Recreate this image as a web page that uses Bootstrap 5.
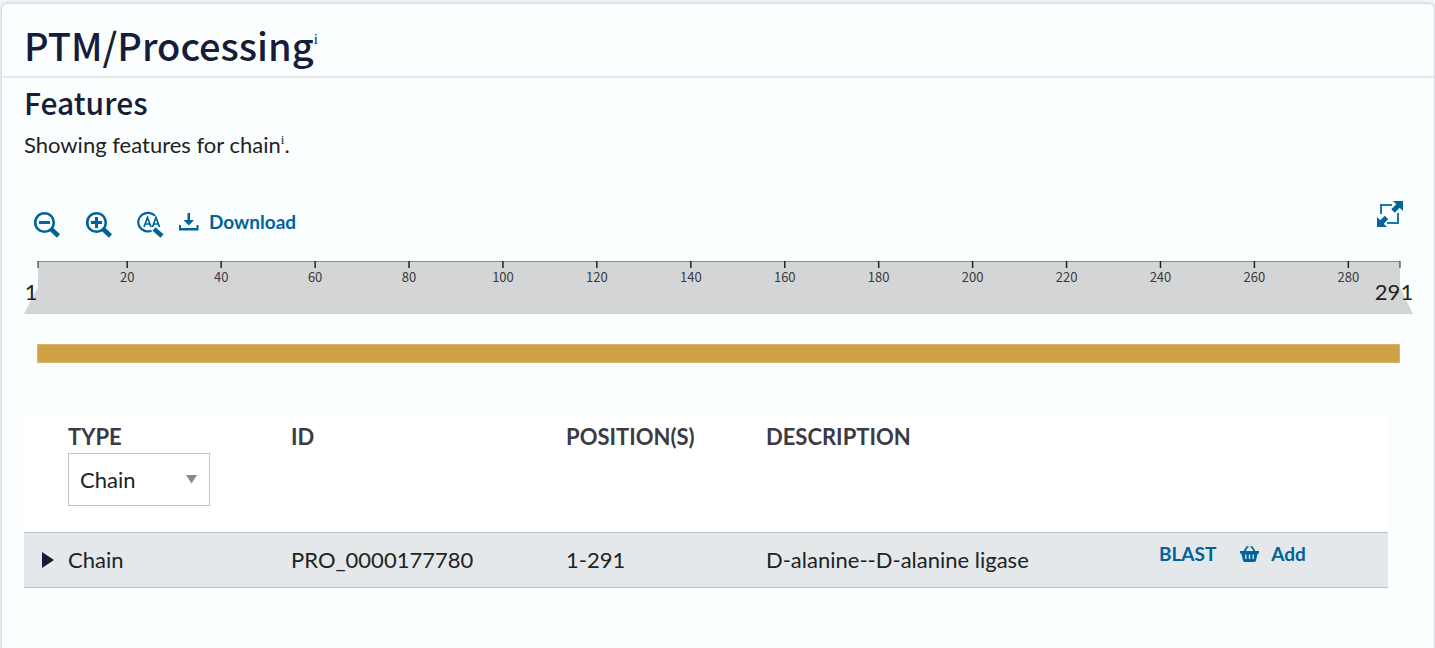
<!DOCTYPE html>
<html lang="en">
<head>
<meta charset="utf-8">
<meta name="viewport" content="width=device-width, initial-scale=1">
<title>PTM/Processing</title>
<link href="https://cdn.jsdelivr.net/npm/bootstrap@5.3.0/dist/css/bootstrap.min.css" rel="stylesheet">
<style>
  body { background: #f3f6f9; color: #222; font: 400 22px/30px Lato, sans-serif; }
  .section-card { min-height: calc(100vh - 4px); margin: 4px 1px 0 2px; background: #fbfeff; border: 0; border-radius: 5px 5px 0 0; box-shadow: 0 0 3px 1px #c9ccd4; color: inherit; }
  .section-head { padding: 16px 22px 6px; border-bottom: 2px solid #e4e8eb; }
  h2, h3 { font-family: "Noto Sans CJK SC", sans-serif; font-weight: 500; color: #161d39; margin: 0; }
  h2 { font-size: 38px; line-height: 50px; }
  h3 { font-size: 30px; line-height: 40px; }
  .info { font: 400 13px/12px "Liberation Serif", serif; color: #161d39; top: 0; vertical-align: 9px; }
  h2 .info { vertical-align: 17px; font-size: 15px; }
  .section-body { padding: 4px 22px 0; }
  .tool, .tool:hover { color: #00639a; font-weight: 700; font-size: 19px; line-height: 24px; text-decoration: none; background: none; border: 0; padding: 0; }
  .tool svg { display: block; }
  .toolbar { margin-top: 38px; padding: 0 9px; height: 40px; }
  .tool-zoom { padding-top: 13px; }
  .tool-download { padding-top: 12px; margin-left: 13px; gap: 9px; }
  .ruler { display: block; width: calc(100% - 24px); height: 54px; margin: 23px 0 0 14px; overflow: visible; }
  .ruler-row { margin-right: 2px; }
  .ruler text { font: 13px "Noto Sans CJK SC", sans-serif; fill: #3a3a3a; text-anchor: middle; }
  .ruler .edge { font: 400 22px Lato, sans-serif; fill: #222; }
  .chain-track { height: 19px; margin: 29px 12px 0 13px; background: #cfa246; border: 1px solid #d9b56c; }
  .ruler-band { fill: #d4d5d7; }
  .features { width: calc(100% - 24px); table-layout: fixed; margin: 53px 0 0; }
  .features th { height: 116px; padding: 6px 0 0; vertical-align: top; background: #fff; color: #3a3b45; font-weight: 700; }
  .features td { height: 55px; padding: 0; background: #e4e8eb; border: solid #bfc1c3; border-width: 1px 0; vertical-align: middle; }
  .type-select { display: block; width: 142px; height: 53px; margin-top: 1px; padding: 0 11px; appearance: none; border: 1px solid #c4c4c4; border-radius: 0; color: #222; font-weight: 400;
    background: #fff url("data:image/svg+xml,%3Csvg xmlns='http://www.w3.org/2000/svg' width='11' height='9'%3E%3Cpath d='M0 0h11L5.5 8.5z' fill='%238a8a8a'/%3E%3C/svg%3E") no-repeat right 12px center; }
  .opener { display: block; margin-left: 18px; padding: 0; border: 0; background: none; line-height: 0; }
  .row-actions { gap: 24px; padding-bottom: 12px; }
</style>
</head>
<body>
<main class="card section-card">
  <header class="section-head">
    <h2>PTM/Processing<sup class="info">i</sup></h2>
  </header>
  <div class="section-body">
    <h3>Features</h3>
    <p class="mb-0 mt-2">Showing features for chain<sup class="info">i</sup>.</p>

    <div class="toolbar d-flex align-items-start">
      <button class="tool tool-zoom" type="button" aria-label="Zoom out">
        <svg width="28" height="28" viewBox="0 0 28 28" fill="none" stroke="#00639a"><circle cx="11.500" cy="11.500" r="9.300" stroke-width="2.600"/><path d="M6 11.500h11" stroke-width="3"/><path d="M18 18l7.500 7" stroke-width="4.500"/></svg>
      </button>
      <button class="tool tool-zoom ms-4" type="button" aria-label="Zoom in">
        <svg width="28" height="28" viewBox="0 0 28 28" fill="none" stroke="#00639a"><circle cx="11.500" cy="11.500" r="9.300" stroke-width="2.600"/><path d="M6 11.500h11M11.500 6v11" stroke-width="3"/><path d="M18 18l7.500 7" stroke-width="4.500"/></svg>
      </button>
      <button class="tool tool-zoom ms-4" type="button" aria-label="Zoom to sequence">
        <svg width="28" height="28" viewBox="1 0 28 28" fill="none" stroke="#00639a"><path d="M19 4.700A9.700 9.300 0 1 0 15.500 19.800" stroke-width="2.200"/><path d="M8 16l3.500-9.500L15 16M9.300 13h4.500M16.500 16L20 6.500l3.500 9.500M17.800 13h4.500" stroke-width="1.700"/><path d="M18 18l8 7" stroke-width="4.500"/></svg>
      </button>
      <button class="tool tool-download d-flex align-items-center" type="button">
        <svg width="22" height="22" viewBox="0 0 22 22" fill="#00639a"><path d="M9.500 2h2.500v7h4l-5.200 5.500L5.500 9h4zM1 14h2v3h15.500v-3h2v5.500H1z"/></svg><span>Download</span>
      </button>
      <button class="tool ms-auto" type="button" aria-label="Full screen">
        <svg width="28" height="32" viewBox="0 -3 28 32"><path d="M6 13V4h11M12 22h11V12" fill="none" stroke="#1b78ad" stroke-width="2"/><path d="M18 0h10v10l-3.300-3.300-5 5-3.400-3.400 5-5zM2 26V16l3.300 3.300 4.500-4.500 3.400 3.400-4.500 4.500L12 26z" fill="#00639a"/></svg>
      </button>
    </div>

    <div class="ruler-row">
      <svg class="ruler" id="ruler" role="img" aria-label="Sequence positions 1 to 291">
        <rect class="ruler-band" width="100%" height="53"/>
        <path class="ruler-band" d="M0 26V53H-14z"/>
        <svg x="100%" overflow="visible"><path class="ruler-band" d="M0 26V53H13z"/></svg>
        <rect width="100%" height="1" fill="#8c8d8f"/>
        <g id="ticks"></g>
        <text class="edge" x="-7" y="39">1</text>
        <svg x="100%" overflow="visible"><text class="edge" x="-6" y="39">291</text></svg>
      </svg>
    </div>
    <div class="chain-track" role="img" aria-label="Chain 1-291"></div>

    <table class="features">
      <colgroup><col style="width:3.230%"><col style="width:16.350%"><col style="width:20.160%"><col style="width:14.660%"><col style="width:28.810%"><col></colgroup>
      <thead>
        <tr>
          <th></th>
          <th scope="col"><label for="type" class="d-block">TYPE</label>
            <select class="type-select" id="type"><option>Chain</option></select></th>
          <th scope="col">ID</th><th scope="col">POSITION(S)</th><th scope="col">DESCRIPTION</th><th></th>
        </tr>
      </thead>
      <tbody>
        <tr>
          <td><button class="opener" type="button" aria-label="Show details"><svg width="12" height="16"><path d="M0 0l12 8-12 8z" fill="#161d39"/></svg></button></td>
          <td>Chain</td><td>PRO_0000177780</td><td>1-291</td><td>D-alanine--D-alanine ligase</td>
          <td><div class="row-actions d-flex align-items-center">
            <a class="tool" href="#">BLAST</a>
            <button class="tool d-flex align-items-center" type="button">
              <svg width="19" height="16" viewBox="0 0 19 16" fill="#00639a"><path d="M0 5h19v2.500h-1.300L16 14.500q-.3 1.500-1.800 1.500H4.800Q3.300 16 3 14.500L1.300 7.500H0z"/><path d="M4 6l3-5h1.500M15 6l-3-5h-1.500" fill="none" stroke="#00639a" stroke-width="1.700"/><path d="M5.800 8.500v4.500M9.500 8.500v4.500M13.200 8.500v4.500" stroke="#e4e8eb" stroke-width="1.300"/></svg><span class="ms-2 ps-1">Add</span>
            </button></div></td>
        </tr>
      </tbody>
    </table>
  </div>
</main>
<script src="https://cdn.jsdelivr.net/npm/bootstrap@5.3.0/dist/js/bootstrap.bundle.min.js"></script>
<script>
  // One tick per 20 residues, plus the two ends of the sequence
  const length = 291;
  let marks = '';
  const at = n => ((n - 1) / (length - 1) * 100).toFixed(3) + '%';
  for (const n of [1, length]) marks += `<line x1="${at(n)}" x2="${at(n)}" y1="0" y2="7" stroke="#222"/>`;
  for (let n = 20; n < length; n += 20)
    marks += `<line x1="${at(n)}" x2="${at(n)}" y1="0" y2="7" stroke="#222" stroke-width="1.500"/><text x="${at(n)}" y="21">${n}</text>`;
  document.getElementById('ticks').innerHTML = marks;
</script>
</body>
</html>
